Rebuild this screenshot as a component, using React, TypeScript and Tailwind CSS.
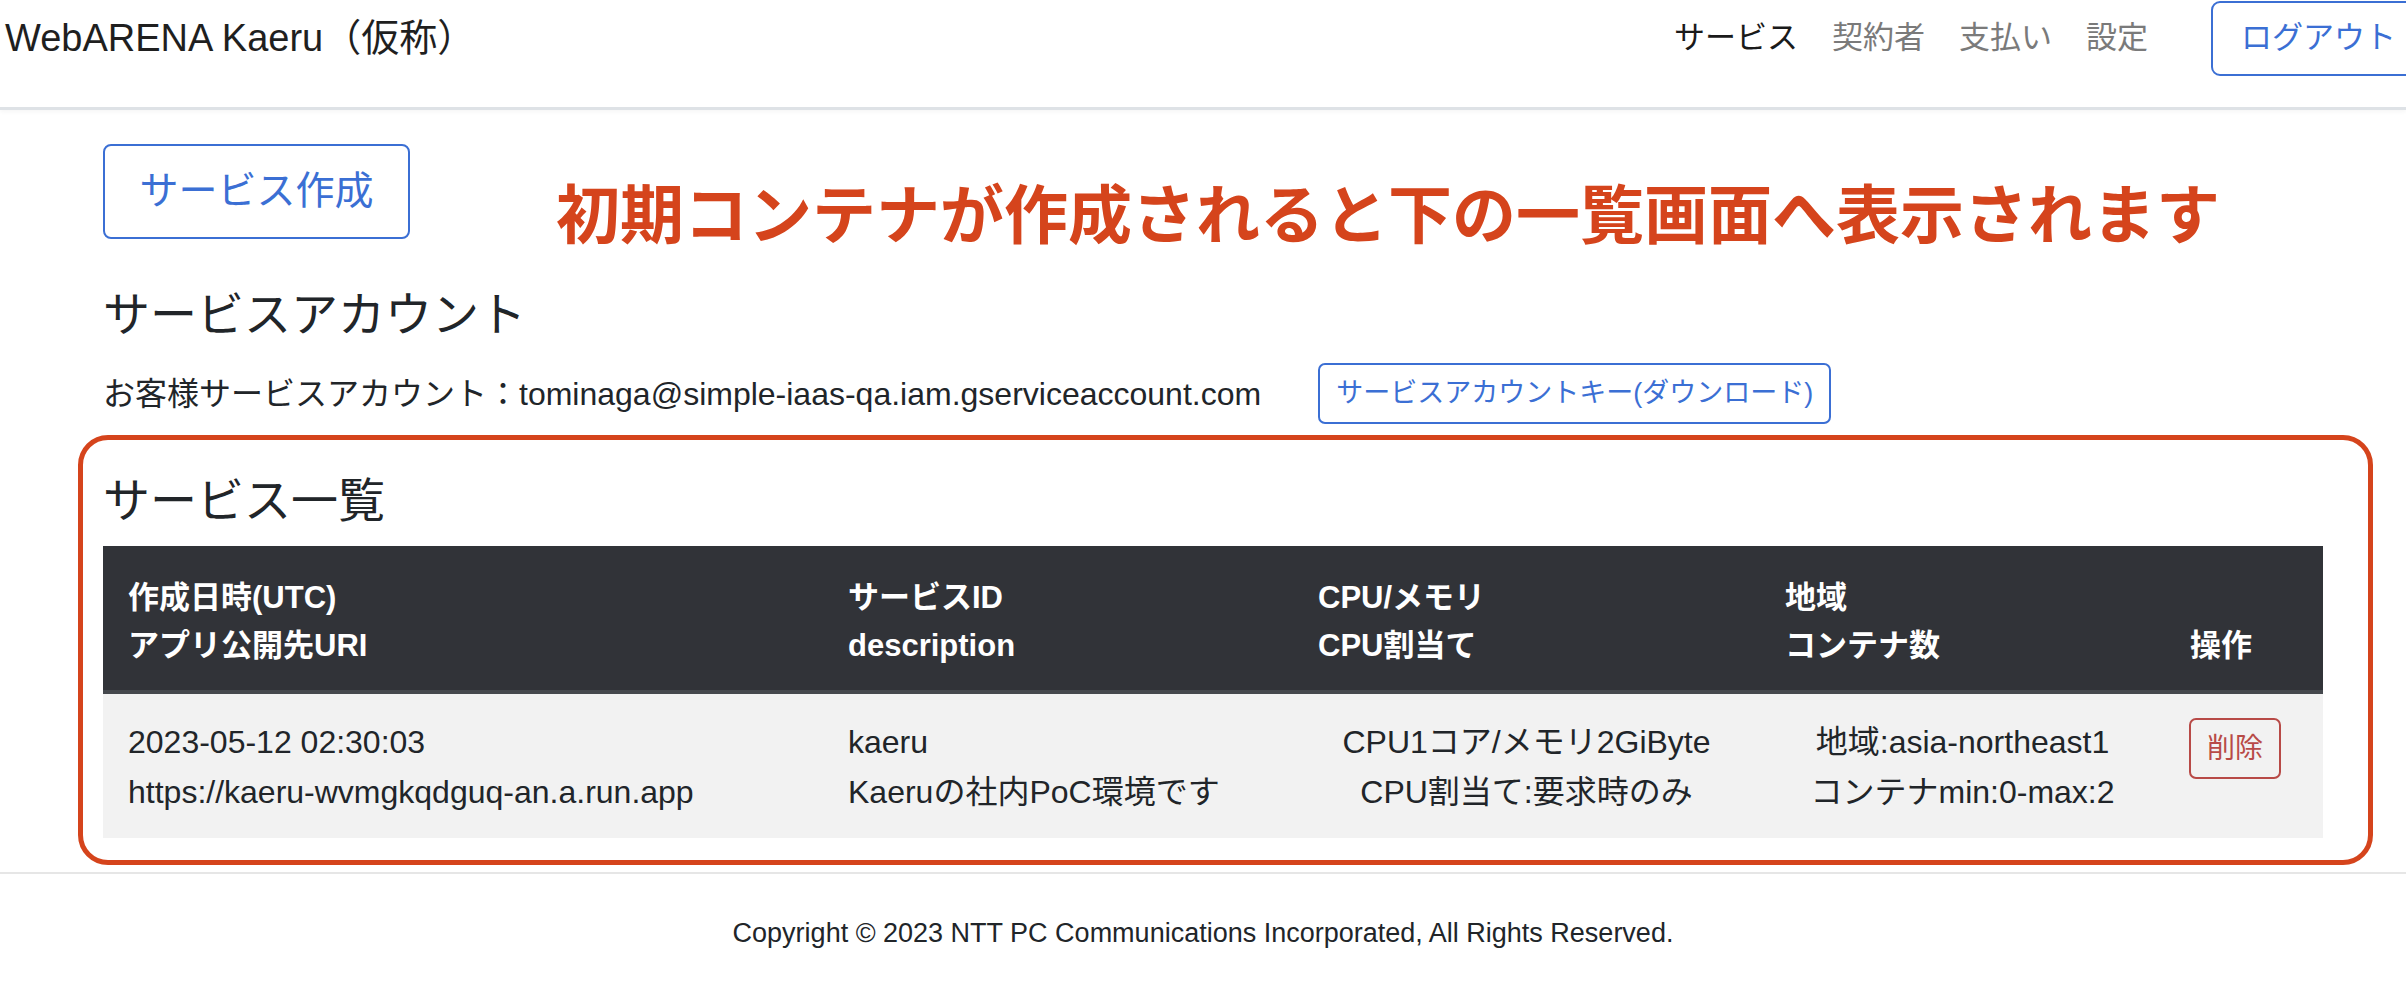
const navLinks = [
  { label: "サービス", active: true },
  { label: "契約者", active: false },
  { label: "支払い", active: false },
  { label: "設定", active: false },
];

const services = [
  {
    createdAt: "2023-05-12 02:30:03",
    uri: "https://kaeru-wvmgkqdguq-an.a.run.app",
    id: "kaeru",
    description: "Kaeruの社内PoC環境です",
    spec: "CPU1コア/メモリ2GiByte",
    cpuAlloc: "CPU割当て:要求時のみ",
    region: "地域:asia-northeast1",
    containers: "コンテナmin:0-max:2",
  },
];

function Header() {
  return (
    <header className="h-[110px] overflow-hidden border-b-[3px] border-[#dee2e6] shadow-[0_2px_4px_rgba(0,0,0,0.04)]">
      <div className="flex h-[76px] items-center justify-between pl-[5px]">
        <div className="text-[38px] leading-[48px] text-[#1f1f1f]">WebARENA Kaeru（仮称）</div>
        <div className="flex items-center">
          <nav className="flex items-center">
            {navLinks.map((link) => (
              <a
                key={link.label}
                href="#"
                className={`px-[17px] text-[31px] leading-[46px] ${
                  link.active ? "text-[#1a1a1a]" : "text-[#7a7a7a]"
                }`}
              >
                {link.label}
              </a>
            ))}
          </nav>
          <button
            type="button"
            className="ml-[46px] -mr-[20px] h-[75px] rounded-[9px] border-2 border-[#3b6fd4] px-[28px] text-[31px] text-[#3b6fd4]"
          >
            ログアウト
          </button>
        </div>
      </div>
    </header>
  );
}

function ServiceTable() {
  return (
    <div className="mt-[17px] w-[2220px]">
      <div className="grid grid-cols-[720px_470px_467px_405px_158px] items-end border-b-4 border-[#45484d] bg-[#313338] text-[31px] font-bold leading-[48px] text-white">
        <div className="px-[25px] pt-[28px] pb-[20px]">
          <div>作成日時(UTC)</div>
          <div>アプリ公開先URI</div>
        </div>
        <div className="px-[25px] pt-[28px] pb-[20px]">
          <div>サービスID</div>
          <div>description</div>
        </div>
        <div className="px-[25px] pt-[28px] pb-[20px]">
          <div>CPU/メモリ</div>
          <div>CPU割当て</div>
        </div>
        <div className="px-[25px] pt-[28px] pb-[20px]">
          <div>地域</div>
          <div>コンテナ数</div>
        </div>
        <div className="px-[25px] pt-[28px] pb-[20px]">
          <div>操作</div>
        </div>
      </div>
      {services.map((s) => (
        <div
          key={s.id}
          className="grid grid-cols-[720px_470px_467px_405px_158px] items-start bg-[#f2f2f2] text-[32px] leading-[50px] text-[#212529]"
        >
          <div className="px-[25px] pt-[23px] pb-[21px]">
            <div>{s.createdAt}</div>
            <div>{s.uri}</div>
          </div>
          <div className="px-[25px] pt-[23px] pb-[21px]">
            <div>{s.id}</div>
            <div>{s.description}</div>
          </div>
          <div className="px-[25px] pt-[23px] pb-[21px] text-center">
            <div>{s.spec}</div>
            <div>{s.cpuAlloc}</div>
          </div>
          <div className="px-[25px] pt-[23px] pb-[21px] text-center">
            <div>{s.region}</div>
            <div>{s.containers}</div>
          </div>
          <div className="px-[24px] pt-[24px]">
            <button
              type="button"
              className="h-[61px] w-[92px] rounded-[7px] border-2 border-[#b84a47] text-[28px] leading-none text-[#b84a47]"
            >
              削除
            </button>
          </div>
        </div>
      ))}
    </div>
  );
}

export default function App() {
  return (
    <div className="min-h-screen overflow-hidden bg-white font-['Liberation_Sans','Noto_Sans_CJK_JP',sans-serif] text-[#212529]">
      <Header />

      <main className="px-[103px]">
        <div className="mt-[34px] flex items-start">
          <button
            type="button"
            className="h-[95px] w-[307px] rounded-[8px] border-2 border-[#3b6fd4] text-[39px] text-[#3b6fd4]"
          >
            サービス作成
          </button>
          <p className="ml-[146px] mt-[34px] text-[64px] font-bold leading-[76px] text-[#d5441c]">
            初期コンテナが作成されると下の一覧画面へ表示されます
          </p>
        </div>

        <h2 className="mt-[33px] text-[47px] leading-[56px]">サービスアカウント</h2>

        <div className="mt-[20px] flex items-center">
          <span className="text-[32px] leading-[48px]">
            お客様サービスアカウント：tominaga@simple-iaas-qa.iam.gserviceaccount.com
          </span>
          <button
            type="button"
            className="ml-[57px] h-[61px] rounded-[7px] border-2 border-[#3b6fd4] px-[16px] text-[27px] text-[#3b6fd4]"
          >
            サービスアカウントキー(ダウンロード)
          </button>
        </div>

        <section className="-ml-[25px] mt-[11px] w-[2295px] rounded-[30px] border-[5px] border-[#d5441c] pb-[22px] pl-[20px] pt-[33px]">
          <h2 className="text-[47px] leading-[56px]">サービス一覧</h2>
          <ServiceTable />
        </section>
      </main>

      <footer className="mt-[7px] border-t-2 border-[#e6e6e6] pt-[39px] text-center text-[27px] leading-[40px] text-[#212529]">
        Copyright © 2023 NTT PC Communications Incorporated, All Rights Reserved.
      </footer>
    </div>
  );
}
